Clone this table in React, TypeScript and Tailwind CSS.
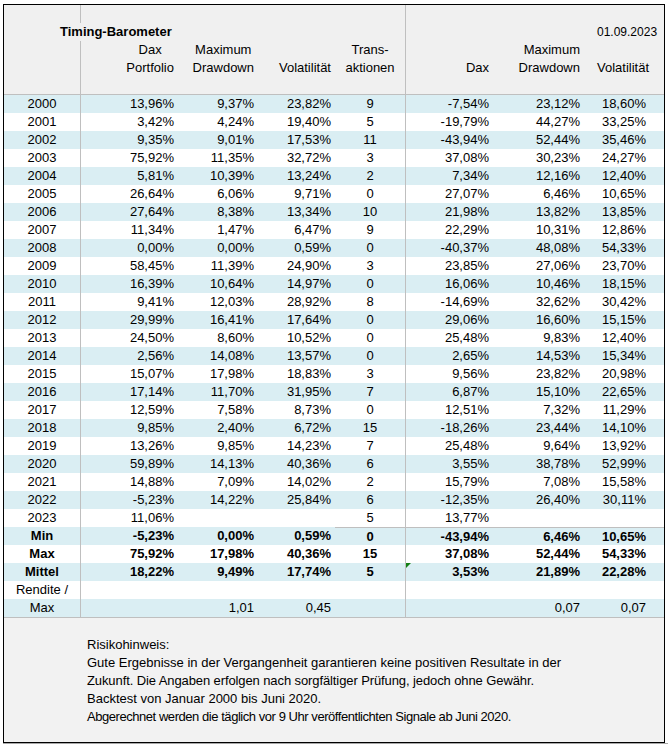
import React from 'react';

type Row = {
  label: string;
  vals: string[];
  bold?: boolean;
};

const ROWS: Row[] = [
  { label: '2000', vals: ['13,96%', '9,37%', '23,82%', '9', '-7,54%', '23,12%', '18,60%'] },
  { label: '2001', vals: ['3,42%', '4,24%', '19,40%', '5', '-19,79%', '44,27%', '33,25%'] },
  { label: '2002', vals: ['9,35%', '9,01%', '17,53%', '11', '-43,94%', '52,44%', '35,46%'] },
  { label: '2003', vals: ['75,92%', '11,35%', '32,72%', '3', '37,08%', '30,23%', '24,27%'] },
  { label: '2004', vals: ['5,81%', '10,39%', '13,24%', '2', '7,34%', '12,16%', '12,40%'] },
  { label: '2005', vals: ['26,64%', '6,06%', '9,71%', '0', '27,07%', '6,46%', '10,65%'] },
  { label: '2006', vals: ['27,64%', '8,38%', '13,34%', '10', '21,98%', '13,82%', '13,85%'] },
  { label: '2007', vals: ['11,34%', '1,47%', '6,47%', '9', '22,29%', '10,31%', '12,86%'] },
  { label: '2008', vals: ['0,00%', '0,00%', '0,59%', '0', '-40,37%', '48,08%', '54,33%'] },
  { label: '2009', vals: ['58,45%', '11,39%', '24,90%', '3', '23,85%', '27,06%', '23,70%'] },
  { label: '2010', vals: ['16,39%', '10,64%', '14,97%', '0', '16,06%', '10,46%', '18,15%'] },
  { label: '2011', vals: ['9,41%', '12,03%', '28,92%', '8', '-14,69%', '32,62%', '30,42%'] },
  { label: '2012', vals: ['29,99%', '16,41%', '17,64%', '0', '29,06%', '16,60%', '15,15%'] },
  { label: '2013', vals: ['24,50%', '8,60%', '10,52%', '0', '25,48%', '9,83%', '12,40%'] },
  { label: '2014', vals: ['2,56%', '14,08%', '13,57%', '0', '2,65%', '14,53%', '15,34%'] },
  { label: '2015', vals: ['15,07%', '17,98%', '18,83%', '3', '9,56%', '23,82%', '20,98%'] },
  { label: '2016', vals: ['17,14%', '11,70%', '31,95%', '7', '6,87%', '15,10%', '22,65%'] },
  { label: '2017', vals: ['12,59%', '7,58%', '8,73%', '0', '12,51%', '7,32%', '11,29%'] },
  { label: '2018', vals: ['9,85%', '2,40%', '6,72%', '15', '-18,26%', '23,44%', '14,10%'] },
  { label: '2019', vals: ['13,26%', '9,85%', '14,23%', '7', '25,48%', '9,64%', '13,92%'] },
  { label: '2020', vals: ['59,89%', '14,13%', '40,36%', '6', '3,55%', '38,78%', '52,99%'] },
  { label: '2021', vals: ['14,88%', '7,09%', '14,02%', '2', '15,79%', '7,08%', '15,58%'] },
  { label: '2022', vals: ['-5,23%', '14,22%', '25,84%', '6', '-12,35%', '26,40%', '30,11%'] },
  { label: '2023', vals: ['11,06%', '', '', '5', '13,77%', '', ''] },
  { label: 'Min', bold: true, vals: ['-5,23%', '0,00%', '0,59%', '0', '-43,94%', '6,46%', '10,65%'] },
  { label: 'Max', bold: true, vals: ['75,92%', '17,98%', '40,36%', '15', '37,08%', '52,44%', '54,33%'] },
  { label: 'Mittel', bold: true, vals: ['18,22%', '9,49%', '17,74%', '5', '3,53%', '21,89%', '22,28%'] },
  { label: 'Rendite /', vals: ['', '', '', '', '', '', ''] },
  { label: 'Max', vals: ['', '1,01', '0,45', '', '', '0,07', '0,07'] },
];

const GRID = 'grid grid-cols-[77px_97px_80px_77px_71px_87px_91px_80px]';
const LINE = 'border-[#bfbfbf]';

function DataRow({ row, index }: { row: Row; index: number }) {
  const bg = index % 2 === 0 ? 'bg-[#daeef3]' : 'bg-white';
  const weight = row.bold ? 'font-bold' : '';
  const summaryTop = row.label === 'Min' ? `border-t ${LINE}` : '';
  const [v1, v2, v3, t, d1, d2, d3] = row.vals;

  return (
    <div className={`${GRID} h-[18px] leading-[18px] ${bg} ${weight}`}>
      <div className={`text-center border-r ${LINE}`}>{row.label}</div>
      <div className="text-right pr-[4px]">{v1}</div>
      <div className="text-right pr-[4px]">{v2}</div>
      <div className="text-right pr-[4px]">{v3}</div>
      <div className={`text-center border-r ${LINE} ${summaryTop}`}>{t}</div>
      <div className={`relative text-right pr-[4px] ${summaryTop}`}>
        {row.label === 'Mittel' && (
          <span className="absolute left-0 top-0 w-0 h-0 border-t-[5px] border-t-[#137f13] border-r-[5px] border-r-transparent" />
        )}
        {d1}
      </div>
      <div className={`text-right pr-[4px] ${summaryTop}`}>{d2}</div>
      <div className={`text-right pr-[18px] ${summaryTop}`}>{d3}</div>
    </div>
  );
}

function Header() {
  const br = `border-r ${LINE}`;
  return (
    <div className={`${GRID} grid-rows-[18px_18px_36px_17px] leading-[18px] bg-[#f0f0f0] border-b ${LINE}`}>
      {/* row 1 */}
      <div className={br} />
      <div />
      <div />
      <div />
      <div className={br} />
      <div />
      <div />
      <div />

      {/* row 2 */}
      <div className="col-span-3 pl-[56px] font-bold whitespace-nowrap">Timing-Barometer</div>
      <div />
      <div className={br} />
      <div />
      <div />
      <div className="pl-[13px] text-[12px]">01.09.2023</div>

      {/* rows 3-4 */}
      <div className={br} />
      <div className="flex justify-end pr-[4px]">
        <div className="text-center">
          <div>Dax</div>
          <div>Portfolio</div>
        </div>
      </div>
      <div className="flex justify-end pr-[4px]">
        <div className="text-center">
          <div>Maximum</div>
          <div>Drawdown</div>
        </div>
      </div>
      <div className="flex flex-col justify-end items-end pr-[4px]">
        <div>Volatilität</div>
      </div>
      <div className={`flex justify-center ${br}`}>
        <div className="text-center">
          <div>Trans-</div>
          <div>aktionen</div>
        </div>
      </div>
      <div className="flex flex-col justify-end items-end pr-[4px]">
        <div>Dax</div>
      </div>
      <div className="text-right pr-[4px]">
        <div>Maximum</div>
        <div>Drawdown</div>
      </div>
      <div className="flex flex-col justify-end pl-[13px]">
        <div>Volatilität</div>
      </div>

      {/* row 5 */}
      <div className={br} />
      <div />
      <div />
      <div />
      <div className={br} />
      <div />
      <div />
      <div />
    </div>
  );
}

export default function App() {
  return (
    <div className="bg-white w-[668px] h-[745px] pl-[3px] pt-[4px] text-[13px] text-black font-['Liberation_Sans',Arial,sans-serif]">
      <div className="w-[662px] border border-black">
        <Header />
        <div className={`border-b ${LINE}`}>
          {ROWS.map((row, i) => (
            <DataRow key={`${row.label}-${i}`} row={row} index={i} />
          ))}
        </div>
        <div className="bg-[#f2f2f2] h-[124px] pt-[18px] pl-[83px] leading-[18px] whitespace-nowrap">
          <p>Risikohinweis:</p>
          <p>Gute Ergebnisse in der Vergangenheit garantieren keine positiven Resultate in der</p>
          <p className="tracking-[-0.1px]">Zukunft. Die Angaben erfolgen nach sorgfältiger Prüfung, jedoch ohne Gewähr.</p>
          <p>Backtest von Januar 2000 bis Juni 2020.</p>
          <p className="tracking-[-0.45px]">Abgerechnet werden die täglich vor 9 Uhr veröffentlichten Signale ab Juni 2020.</p>
        </div>
      </div>
      <div className="h-[1px] bg-[#a8a8a8]" />
    </div>
  );
}
